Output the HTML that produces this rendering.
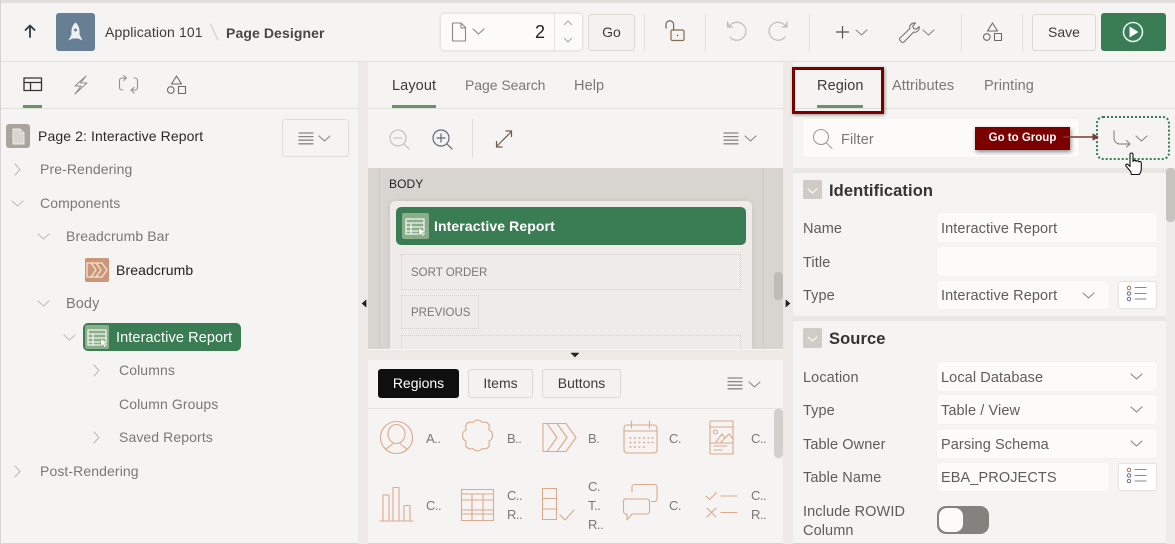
<!DOCTYPE html>
<html><head><meta charset="utf-8"><style>
html,body{margin:0;padding:0}
body{width:1175px;height:544px;overflow:hidden;position:relative;background:#f5f4f2;font-family:"Liberation Sans",sans-serif;font-size:14.5px;color:#5f5c5a}
.b{position:absolute;box-sizing:border-box}
.t{position:absolute;white-space:nowrap;line-height:20px;letter-spacing:.1px;margin-top:1px}
.g{color:#7b7774}
.k{color:#3d3b39}
.s{font-size:13px;letter-spacing:-.5px}
.f{position:absolute;box-sizing:border-box;background:#fcfbfa;border-radius:3px;box-shadow:0 0 1px rgba(0,0,0,.08)}
.btn{position:absolute;box-sizing:border-box;background:#f3f2f0;border:1px solid #dcd9d5;border-radius:3px;text-align:center}
svg{position:absolute;left:0;top:0}
</style></head><body>
<div class="b" style="left:0;top:0;width:1175px;height:3px;background:#e2e0dd"></div>
<div class="b" style="left:0;top:61px;width:1175px;height:1px;background:#e2e0dd"></div>
<div class="b" style="left:0;top:0;width:1px;height:544px;background:#d6d3d0"></div>
<div class="b" style="left:0;top:543px;width:1175px;height:1px;background:#d6d3d0"></div>
<div class="b" style="left:358px;top:62px;width:10px;height:482px;background:#ece9e6"></div>
<div class="b" style="left:783px;top:62px;width:10px;height:482px;background:#ece9e6"></div>
<div class="b" style="left:1px;top:108px;width:357px;height:1px;background:#e2e0dd"></div>
<div class="b" style="left:368px;top:108px;width:415px;height:1px;background:#e2e0dd"></div>
<div class="b" style="left:793px;top:108px;width:382px;height:1px;background:#e2e0dd"></div>
<div class="b" style="left:23px;top:105px;width:19px;height:3px;background:#6f8f69"></div>
<div class="b" style="left:392px;top:105px;width:44px;height:3px;background:#6f8f69"></div>
<div class="b" style="left:817px;top:105px;width:46px;height:3px;background:#6f8f69"></div>

<!-- canvas -->
<div class="b" style="left:368px;top:168px;width:415px;height:181px;background:#d8d4cf"></div>
<div class="b" style="left:379px;top:168px;width:1px;height:181px;background:#d0ccc7"></div>
<div class="b" style="left:763px;top:168px;width:0;height:181px;border-left:1px dotted #c4c0bb"></div>
<div class="b" style="left:390px;top:201px;width:362px;height:148px;background:#eeebe8;border-radius:5px 5px 0 0;box-shadow:0 0 6px rgba(0,0,0,.08)"></div>
<div class="b" style="left:396px;top:207px;width:350px;height:38px;background:#3a7d55;border-radius:5px"></div>
<div class="b" style="left:402px;top:213px;width:27px;height:26px;background:#8aae88;border-radius:2px"></div>
<div class="b" style="left:401px;top:254px;width:340px;height:36px;border:1px dotted #d3cfca"></div>
<div class="b" style="left:401px;top:295px;width:78px;height:34px;border:1px dotted #d3cfca"></div>
<div class="b" style="left:401px;top:335px;width:340px;height:14px;border:1px dotted #d3cfca;border-bottom:0"></div>
<div class="b" style="left:774px;top:272px;width:9px;height:28px;background:#bfbbb6;border-radius:4px"></div>
<div class="b" style="left:368px;top:349px;width:415px;height:11px;background:#ece9e6;border-top:1px solid #f7f6f5"></div>
<div class="b" style="left:368px;top:408px;width:415px;height:1px;background:#e4e2df"></div>
<div class="b" style="left:774px;top:409px;width:9px;height:49px;background:#d2d0cd;border-radius:4px"></div>

<!-- right bands -->
<div class="b" style="left:793px;top:168px;width:382px;height:5px;background:#e9e7e4"></div>
<div class="b" style="left:793px;top:316px;width:373px;height:5px;background:#e9e7e4"></div>
<div class="b" style="left:1166px;top:173px;width:9px;height:371px;background:#eeecea"></div>
<div class="b" style="left:1166px;top:168px;width:9px;height:54px;background:#c7c3bf;border-radius:4px"></div>

<!-- top bar boxes -->
<div class="b" style="left:56px;top:13px;width:39px;height:38px;background:#667f95;border-radius:3px"></div>
<div class="f" style="left:441px;top:14px;width:141px;height:36px;box-shadow:0 0 3px rgba(0,0,0,.18)"></div>
<div class="btn k" style="left:588px;top:14px;width:47px;height:37px;line-height:35px;font-size:14px">Go</div>
<div class="btn k" style="left:1032px;top:14px;width:64px;height:37px;line-height:35px;font-size:14px;background:#f6f5f3">Save</div>
<div class="b" style="left:1101px;top:13px;width:65px;height:38px;background:#3a7d55;border-radius:3px"></div>
<div class="t k" style="left:105px;top:21px;font-size:14px;letter-spacing:.13px">Application 101</div>
<div class="t k" style="left:226px;top:22px;font-weight:bold;font-size:14px;color:#4a4745">Page Designer</div>
<div class="t" style="left:535px;top:21px;font-size:18px;color:#222">2</div>

<!-- left -->
<div class="b" style="left:6px;top:124px;width:24px;height:24px;background:#aaa49c;border-radius:3px"></div>
<div class="t" style="left:38px;top:125px;color:#2a2a2a;font-size:14px">Page 2: Interactive Report</div>
<div class="b" style="left:282px;top:119px;width:67px;height:38px;border:1px solid #e0dcd8;border-radius:3px"></div>
<div class="t g" style="left:40px;top:158px;font-size:14px">Pre-Rendering</div>
<div class="t g" style="left:40px;top:192px;font-size:14px">Components</div>
<div class="t g" style="left:66px;top:225px;font-size:14px">Breadcrumb Bar</div>
<div class="b" style="left:85px;top:258px;width:24px;height:24px;background:#cc9678;border-radius:2px"></div>
<div class="t" style="left:116px;top:259px;color:#222;font-size:14px">Breadcrumb</div>
<div class="t g" style="left:66px;top:293px">Body</div>
<div class="b" style="left:83px;top:323px;width:158px;height:28px;background:#3a7d55;border-radius:5px"></div>
<div class="b" style="left:85px;top:325px;width:24px;height:24px;background:#8aae88;border-radius:2px"></div>
<div class="t" style="left:116px;top:327px;color:#fff">Interactive Report</div>
<div class="t g" style="left:119px;top:359px;font-size:14px">Columns</div>
<div class="t g" style="left:119px;top:393px;font-size:14px">Column Groups</div>
<div class="t g" style="left:119px;top:426px;font-size:14px">Saved Reports</div>
<div class="t g" style="left:40px;top:460px;font-size:14px">Post-Rendering</div>

<!-- middle -->
<div class="t k" style="left:392px;top:75px">Layout</div>
<div class="t g" style="left:465px;top:74px;font-size:14px;letter-spacing:-.05px">Page Search</div>
<div class="t g" style="left:574px;top:75px">Help</div>
<div class="t" style="left:389px;top:173px;font-size:12px;color:#222">BODY</div>
<div class="t" style="left:434px;top:215px;color:#fff;font-weight:bold;font-size:14px">Interactive Report</div>
<div class="t" style="left:411px;top:262px;font-size:11.5px;letter-spacing:0;color:#7a7673">SORT ORDER</div>
<div class="t" style="left:411px;top:302px;font-size:11.5px;letter-spacing:0;color:#7a7673">PREVIOUS</div>
<div class="b" style="left:378px;top:369px;width:81px;height:29px;background:#0f0f0f;border-radius:3px;color:#fff;text-align:center;line-height:28px;font-size:14px">Regions</div>
<div class="btn k" style="left:468px;top:369px;width:65px;height:29px;line-height:26px;font-size:14px">Items</div>
<div class="btn k" style="left:542px;top:369px;width:79px;height:29px;line-height:26px;font-size:14px">Buttons</div>
<div class="t g s" style="left:426px;top:428px">A..</div>
<div class="t g s" style="left:507px;top:428px">B..</div>
<div class="t g s" style="left:588px;top:428px">B.</div>
<div class="t g s" style="left:669px;top:428px">C.</div>
<div class="t g s" style="left:751px;top:428px">C..</div>
<div class="t g s" style="left:426px;top:495px">C..</div>
<div class="t g s" style="left:507px;top:485px">C..</div>
<div class="t g s" style="left:507px;top:504px">R..</div>
<div class="t g s" style="left:588px;top:476px">C.</div>
<div class="t g s" style="left:588px;top:495px">T..</div>
<div class="t g s" style="left:588px;top:514px">R..</div>
<div class="t g s" style="left:669px;top:495px">C.</div>
<div class="t g s" style="left:751px;top:485px">C..</div>
<div class="t g s" style="left:751px;top:504px">R..</div>

<!-- right -->
<div class="b" style="left:792px;top:67px;width:92px;height:47px;border:3px solid #7a0000;box-shadow:1px 1px 3px rgba(0,0,0,.4)"></div>
<div class="t k" style="left:817px;top:75px">Region</div>
<div class="t g" style="left:892px;top:75px">Attributes</div>
<div class="t g" style="left:984px;top:75px">Printing</div>
<div class="f" style="left:803px;top:119px;width:276px;height:38px"></div>
<div class="t g" style="left:841px;top:129px">Filter</div>
<div class="b" style="left:975px;top:127px;width:95px;height:23px;background:#7a0000;box-shadow:1px 2px 4px rgba(0,0,0,.45);color:#fff;font-weight:bold;font-size:11.5px;line-height:23px;text-align:center">Go to Group</div>
<div class="b" style="left:1096px;top:116px;width:74px;height:44px;border:2px dotted #3a7d55;border-radius:7px"></div>

<div class="b" style="left:803px;top:180px;width:19px;height:19px;background:#cfcbc6;border-radius:2px"></div>
<div class="t" style="left:829px;top:180px;font-size:16.500px;font-weight:bold;color:#333">Identification</div>
<div class="b" style="left:803px;top:328px;width:19px;height:20px;background:#cfcbc6;border-radius:2px"></div>
<div class="t" style="left:829px;top:328px;font-size:16.500px;font-weight:bold;color:#333">Source</div>

<div class="t" style="left:803px;top:218px">Name</div>
<div class="f" style="left:937px;top:213px;width:220px;height:29px"></div>
<div class="t" style="left:941px;top:218px">Interactive Report</div>
<div class="t" style="left:803px;top:252px">Title</div>
<div class="f" style="left:937px;top:247px;width:220px;height:29px"></div>
<div class="t" style="left:803px;top:285px">Type</div>
<div class="f" style="left:937px;top:281px;width:172px;height:28px"></div>
<div class="t" style="left:941px;top:285px">Interactive Report</div>
<div class="f" style="left:1118px;top:281px;width:39px;height:28px;background:#fff;border:1px solid #e6e3e0"></div>

<div class="t" style="left:803px;top:367px">Location</div>
<div class="f" style="left:937px;top:362px;width:220px;height:29px"></div>
<div class="t" style="left:941px;top:367px">Local Database</div>
<div class="t" style="left:803px;top:400px">Type</div>
<div class="f" style="left:937px;top:395px;width:220px;height:29px"></div>
<div class="t" style="left:941px;top:400px">Table / View</div>
<div class="t" style="left:803px;top:434px">Table Owner</div>
<div class="f" style="left:937px;top:429px;width:220px;height:29px"></div>
<div class="t" style="left:941px;top:434px">Parsing Schema</div>
<div class="t" style="left:803px;top:467px">Table Name</div>
<div class="f" style="left:937px;top:463px;width:172px;height:28px"></div>
<div class="t" style="left:941px;top:467px">EBA_PROJECTS</div>
<div class="f" style="left:1118px;top:463px;width:39px;height:28px;background:#fff;border:1px solid #e6e3e0"></div>
<div class="t" style="left:803px;top:501px">Include ROWID</div>
<div class="t" style="left:803px;top:520px">Column</div>
<div class="b" style="left:937px;top:506px;width:52px;height:28px;background:#85817c;border-radius:9px"></div>
<div class="b" style="left:939px;top:508px;width:24px;height:24px;background:#fcfbfa;border-radius:8px"></div>

<svg width="1175" height="544" viewBox="0 0 1175 544" fill="none" stroke-linecap="round" stroke-linejoin="round">
<defs>
<g id="ham" stroke="#8a8784" stroke-width="1.300"><path d="M0 0h14M0 3.600h14M0 7.200h14M0 10.800h14"/></g>
<path id="ch" d="M0 0l5.500 5 5.500-5" stroke="#8a8682" stroke-width="1.100"/>
<path id="cl" d="M0 0l5.500 5 5.500-5" stroke="#c0bcb8" stroke-width="1.100"/>
<path id="cr" d="M0 0l5 5.500-5 5.500" stroke="#c0bcb8" stroke-width="1.100"/>
<g id="ls" stroke="#8a8784" stroke-width="1.100"><circle cx="2" cy="2" r="1.700" stroke="#b07f5e"/><circle cx="2" cy="7.500" r="1.700" stroke="#7d7a9a"/><circle cx="2" cy="13" r="1.700" stroke="#7d7a9a"/><path d="M8 1.500h11M8 7.500h11M8 13h11"/></g>
<g id="shp" stroke="#6c6865" stroke-width="1.100"><path d="M9.500 0l5 8h-10z"/><circle cx="3.800" cy="14" r="3.300"/><rect x="11.500" y="10.500" width="7" height="7"/></g>
<g id="ir"><rect x="0" y="0" width="18" height="15" fill="none" stroke="#f1f5ee" stroke-width="1.300"/><path d="M0 4h18M0 8h18M0 12h18M5 4v11" stroke="#f1f5ee" stroke-width="1.300"/><path d="M13 9l6.500 4-3 .8 1.600 3-1.500.7-1.500-3-2 2z" fill="#fff" stroke="#6f9a74" stroke-width=".5"/></g>
</defs>

<!-- header icons -->
<path d="M30 37V25.500M25.500 30L30 25.500 34.500 30" stroke="#2e3a45" stroke-width="1.800"/>
<path d="M75.500 22.500c3 2.500 4.500 6 4 12l3 6-4-2h-6l-4 2 3-6c-.5-6 1-9.500 4-12z" fill="#eef1f3"/>
<circle cx="75.500" cy="30" r="1.500" fill="#667f95"/>
<path d="M210.500 24l7.500 16" stroke="#cfcac5"/>
<path d="M452.500 23h8.500l4.500 4.500V41h-13z M461 23v5h4.500" stroke="#8a8682" stroke-width="1.100"/>
<use href="#ch" x="473" y="29"/>
<path d="M554.500 14v36" stroke="#e6e3e0"/>
<path d="M564.500 24.500l3.500-3.500 3.500 3.500M564.500 38.500l3.500 3.500 3.500-3.500" stroke="#a8a5a1" stroke-width="1.100"/>
<path d="M644.500 14v37M705.500 14v37M809.500 14v37M961.500 14v37M1022.500 14v37" stroke="#e2dfdc"/>
<rect x="671" y="30" width="13" height="10.500" rx="1.500" stroke="#8c6a4f" stroke-width="1.200"/>
<path d="M666 28v-3.500a3.800 3.800 0 0 1 7.600 0V30" stroke="#6a6662" stroke-width="1.200"/>
<circle cx="677.500" cy="35.500" r=".7" fill="#555"/>
<path d="M729 26l-1.500-4v5h5M729 27a9 9 0 1 1 1 10" stroke="#c0bdb9" stroke-width="1.200"/>
<path d="M786 26l1-4v5h-5M786 27a9 9 0 1 0-1 10" stroke="#c0bdb9" stroke-width="1.200"/>
<path d="M842.500 26.500v11.500M836.500 32h12" stroke="#555" stroke-width="1.200"/>
<use href="#ch" x="856" y="30"/>
<path d="M901 41.500l-1-1a2 2 0 0 1 0-2.500l10-9.500c-1-3 1.500-6 5.500-5.500l-2.800 3 1 2.500 2.500.8 3-2.800c.5 4-2.800 6.500-5.500 5.500l-9.500 9.800a2 2 0 0 1-3.200-.3z" stroke="#7d7269" stroke-width="1.100"/>
<use href="#ch" x="923" y="30"/>
<use href="#shp" x="983" y="23"/>
<circle cx="1133" cy="32" r="9.500" stroke="#dff3f2" stroke-width="1.600"/>
<path d="M1129.500 26.500l9 5.500-9 5.500z" fill="#fff"/>

<!-- left tabs -->
<path d="M24 78h17.500v12.500H24zM24 82.500h17.500M30.500 82.500v8M24 78h17.500" stroke="#333" stroke-width="1.300"/>
<path d="M86 76l-11 10h6l-6 8 12-11h-6.500z" stroke="#94908c" stroke-width="1.100"/>
<path d="M126 78h-4a2.500 2.500 0 0 0-2.500 2.500v7a2.500 2.500 0 0 0 2.500 2.500h1M123.500 75.500l3 2.500-3 2.500M131 90h4a2.500 2.500 0 0 0 2.500-2.500v-7A2.500 2.500 0 0 0 135 78h-1M134 93l-3-3 3-2.500" stroke="#94908c" stroke-width="1.100"/>
<use href="#shp" x="167" y="76"/>
<path d="M13 129h7l4 4v11H13zM20 129v4h4" fill="#d9d4cd" stroke="#efece8" stroke-width="1"/>
<use href="#ham" x="299" y="133"/><use href="#ch" x="319" y="136"/>

<!-- tree -->
<use href="#cr" x="15" y="164"/>
<use href="#cl" x="12" y="201"/>
<use href="#cl" x="38" y="234"/>
<use href="#cl" x="38" y="301"/>
<use href="#cl" x="64" y="335"/>
<use href="#cr" x="94" y="365"/>
<use href="#cr" x="94" y="432"/>
<use href="#cr" x="15" y="466"/>
<path d="M87 263h15l5 7-5 7H87zM91 263l5 7-5 7M96 263l5 7-5 7" stroke="#f6e3d3" stroke-width="1.300"/>
<use href="#ir" x="88" y="330"/>
<use href="#ir" x="406" y="219"/>
<path d="M366 300l-4 3.500 4 3.500z" fill="#222" stroke="#222" stroke-width=".5"/>
<path d="M786 300l4 3.500-4 3.500z" fill="#222" stroke="#222" stroke-width=".5"/>
<path d="M571 353h8l-4 4z" fill="#222" stroke="#222" stroke-width=".5"/>

<!-- middle toolbar -->
<circle cx="398" cy="138" r="8" stroke="#bfbcb8" stroke-width="1.100"/>
<path d="M394 138h8M404 144l5 5" stroke="#bfbcb8" stroke-width="1.100"/>
<circle cx="441" cy="138" r="8" stroke="#5c6a75" stroke-width="1.200"/>
<path d="M437 138h8M441 134v8M447 144l5 5" stroke="#5c6a75" stroke-width="1.200"/>
<path d="M472.500 119v38" stroke="#dfdcd9"/>
<path d="M497 146l14-14M506 131h5.500v5.500M496.500 141.500v5.500h5.500" stroke="#6b5a4c" stroke-width="1.200"/>
<use href="#ham" x="724" y="133"/><use href="#ch" x="745" y="136"/>
<use href="#ham" x="728" y="378"/><use href="#ch" x="749" y="382"/>

<!-- gallery row 1 -->
<g stroke="#dba98c" stroke-width="1.100">
<circle cx="396.500" cy="437.500" r="16"/>
<ellipse cx="396.500" cy="434" rx="8.500" ry="9.500"/>
<path d="M386 449.500c2-3.500 5-3 6.500-5.500M407 449.500c-2-3.500-5-3-6.500-5.500"/>
<path d="M477.500 421c3 0 4 2.500 5 2.500 2.500-1 5.500 0 6.500 2.500 1 2.300-.5 3.500 0 5 2.500 1 3.500 3.500 3.500 5.500s-1 4.500-3.500 5.500c-.5 1.500 1 2.700 0 5-1 2.500-4 3.500-6.500 2.500-1 0-2 2.500-5 2.500s-4-2.500-5-2.500c-2.500 1-5.500 0-6.500-2.500-1-2.300.5-3.500 0-5-2.500-1-3.500-3.500-3.500-5.500s1-4.500 3.500-5.500c.5-1.500-1-2.700 0-5 1-2.500 4-3.500 6.500-2.500 1 0 2-2.500 5-2.500z" transform="translate(0 -1)"/>
<path d="M543 423.500h23l10 14-10 14h-23zM547 423.500l10 14-10 14M557 423.500l10 14-10 14"/>
<rect x="624" y="425" width="33" height="28" rx="3"/>
<path d="M624 431h33M631.500 421v7M649.500 421v7"/>
<path d="M630 438h.8M634.500 438h.8M639 438h.8M643.500 438h.8M648 438h.8M652 438h.8M630 442.500h.8M634.500 442.500h.8M639 442.500h.8M643.500 442.500h.8M648 442.500h.8M652 442.500h.8M630 447h.8M634.500 447h.8M639 447h.8M643.500 447h.8" stroke-width="1.400"/>
<rect x="710" y="421" width="23" height="33"/>
<path d="M710 427h23M710 443h23M714 446h13M714 450h8"/>
<circle cx="715.500" cy="432" r="2"/>
<path d="M716 442l6-8 3 4 4-4 4 5M721 442l5-5"/>
</g>
<!-- gallery row 2 -->
<g stroke="#dba98c" stroke-width="1.100">
<path d="M380 521h33M383 521v-26h6v26M393 521v-33.500h6V521M404 521v-15.500h6V521"/>
<rect x="461.500" y="489.500" width="32" height="31"/>
<path d="M461.500 494h32M461.500 500h32M461.500 510h32M461.500 514h32M472 494v26M483 494v26"/>
<rect x="542.500" y="488.500" width="14" height="31"/>
<path d="M542.500 498.500h14M542.500 509h14M560 515l5 5 9-10"/>
<path d="M632 492v-5a2.500 2.500 0 0 1 2.500-2.500h20a2.500 2.500 0 0 1 2.500 2.500v12a2.500 2.500 0 0 1-2.500 2.500h-3"/>
<path d="M627 499h20a2.500 2.500 0 0 1 2.500 2.500v10a2.500 2.500 0 0 1-2.500 2.500h-15l-5 6v-6h-1a2.500 2.500 0 0 1-2.500-2.500v-10A2.500 2.500 0 0 1 627 499z"/>
<path d="M706 496l3.500 3.500 7-7M721 496h16M707 508l9 9M716 508l-9 9M721 512.500h16"/>
</g>

<!-- right icons -->
<circle cx="821" cy="137" r="7.500" stroke="#a09d99" stroke-width="1.100"/>
<path d="M826.500 143l5.500 5.500" stroke="#a09d99" stroke-width="1.100"/>
<path d="M1064 137h33" stroke="#7a3a3a" stroke-width="1.500"/>
<path d="M1098 137l-5-3v6z" fill="#7a3a3a" stroke="#7a3a3a"/>
<path d="M1114 131v7a6 6 0 0 0 6 6h10M1126.500 140.500l3.500 3.500-3.500 3" stroke="#8f8c88" stroke-width="1.200"/>
<use href="#ch" x="1136" y="136"/>
<path d="M1131 172l-5-6c-.8-1.200.8-2.500 2-1.500l2 2v-12c0-2 3-2 3 0v7c.5-1.500 3-1.500 3 0 .5-1.200 2.800-1 2.800.5.800-1 2.500-.5 2.500 1v6c0 2-1 4-2 5.500h-8c-.2 0-.3-1.500-.3-2.500z" fill="#fff" stroke="#111" stroke-width="1.100"/>
<path d="M808 189l4.500 4 4.500-4" stroke="#fff" stroke-width="1.100"/>
<path d="M808 337l4.500 4 4.500-4" stroke="#fff" stroke-width="1.100"/>
<use href="#ch" x="1083" y="293"/>
<use href="#ch" x="1131" y="374"/>
<use href="#ch" x="1131" y="407"/>
<use href="#ch" x="1131" y="441"/>
<use href="#ls" x="1127" y="286"/>
<use href="#ls" x="1127" y="468"/>
</svg>
</body></html>
